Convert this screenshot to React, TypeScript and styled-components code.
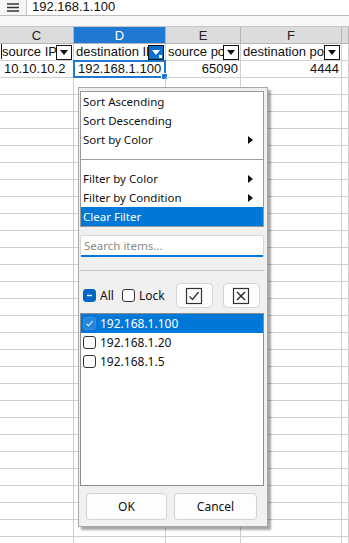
import styled, { createGlobalStyle } from "styled-components";

const GlobalStyle = createGlobalStyle`
  html, body {
    margin: 0;
    padding: 0;
    background: #ffffff;
    overflow: hidden;
  }
  * { box-sizing: border-box; }
`;

const Screen = styled.div`
  position: relative;
  width: 349px;
  height: 543px;
  overflow: hidden;
  background: #ffffff;
  font-family: "Liberation Sans", Arial, sans-serif;
`;

const FormulaBar = styled.div`
  display: flex;
  height: 16px;
  background: #f6f6f6;
  border-bottom: 1px solid #bdbdbd;
`;

const MenuGlyph = styled.div`
  width: 26px;
  display: flex;
  align-items: center;
  justify-content: center;
`;

const FormulaInput = styled.div`
  flex: 1;
  background: #ffffff;
  border-left: 1px solid #c4c4c4;
  padding-left: 5px;
  font-size: 13px;
  line-height: 14px;
  color: #111;
`;

const Spacer = styled.div`
  height: 10px;
  background: #f7f7f7;
`;

const cols = "74px 92px 75px 101px 1fr";

const HeaderRow = styled.div`
  display: grid;
  grid-template-columns: ${cols};
  height: 18px;
  background: #dcdcdc;
  border-top: 1px solid #c8c8c8;
`;

const ColHead = styled.div<{ $active?: boolean }>`
  border-right: 1px solid #b4b4b4;
  border-bottom: 1px solid #b4b4b4;
  display: flex;
  align-items: center;
  justify-content: center;
  font-size: 13px;
  color: ${(p) => (p.$active ? "#ffffff" : "#222")};
  background: ${(p) => (p.$active ? "#1f78d1" : "transparent")};
`;

const Row = styled.div`
  display: grid;
  grid-template-columns: ${cols};
  height: 17px;
`;

const Cell = styled.div<{ $right?: boolean }>`
  position: relative;
  border-right: 1px solid #cfcfcf;
  border-bottom: 1px solid #cfcfcf;
  font-size: 13px;
  line-height: 16px;
  color: #111;
  padding: 0 2px 0 4px;
  white-space: nowrap;
  overflow: hidden;
  text-align: ${(p) => (p.$right ? "right" : "left")};
`;

const FilterCell = styled(Cell)`
  padding-left: 2px;
  padding-right: 18px;
`;

const DropButton = styled.div<{ $active?: boolean }>`
  position: absolute;
  right: 1px;
  top: 1px;
  width: 16px;
  height: 15px;
  border: 1px solid #111;
  background: ${(p) => (p.$active ? "#0b6fd1" : "#ffffff")};
  display: flex;
  align-items: center;
  justify-content: center;
  &::after {
    content: "";
    width: 0;
    height: 0;
    border-left: 4px solid transparent;
    border-right: 4px solid transparent;
    border-top: 5px solid ${(p) => (p.$active ? "#ffffff" : "#111")};
  }
`;

const ActiveMark = styled.div`
  position: absolute;
  right: 1px;
  bottom: 1px;
  width: 3px;
  height: 3px;
  background: #ffffff;
`;

const SelectedCell = styled(Cell)`
  overflow: visible;
  &::before {
    content: "";
    position: absolute;
    left: -1px;
    top: -1px;
    right: -1px;
    bottom: -1px;
    border: 2px solid #1f78d1;
    pointer-events: none;
  }
  &::after {
    content: "";
    position: absolute;
    right: -3px;
    bottom: -3px;
    width: 5px;
    height: 5px;
    background: #1f78d1;
    border: 1px solid #ffffff;
  }
`;

const LeftEdge = styled.div`
  position: absolute;
  left: 0;
  top: 44px;
  width: 2px;
  height: 15px;
  border-right: 1px solid #111;
`;

/* Autofilter popup */

const Popup = styled.div`
  position: absolute;
  left: 78px;
  top: 87px;
  width: 190px;
  height: 440px;
  background: #f0f0f0;
  border: 1px solid #a8a8a8;
  box-shadow: 3px 3px 2px rgba(0, 0, 0, 0.35);
  padding: 3px 3px 0 1px;
  display: flex;
  flex-direction: column;
  font-family: "Noto Sans", "Open Sans", sans-serif;
  font-size: 11.5px;
  color: #111;
`;

const Menu = styled.div`
  background: #ffffff;
  border: 1px solid #9a9a9a;
  display: flex;
  flex-direction: column;
`;

const MenuItem = styled.div<{ $selected?: boolean }>`
  height: 19px;
  display: flex;
  align-items: center;
  justify-content: space-between;
  padding: 0 10px 0 2px;
  background: ${(p) => (p.$selected ? "#0078d7" : "transparent")};
  color: ${(p) => (p.$selected ? "#ffffff" : "#111")};
`;

const SubArrow = styled.span`
  width: 0;
  height: 0;
  border-top: 4.5px solid transparent;
  border-bottom: 4.5px solid transparent;
  border-left: 5px solid #111;
`;

const MenuSeparator = styled.div`
  height: 20px;
  display: flex;
  align-items: center;
  &::after {
    content: "";
    flex: 1;
    height: 1px;
    background: #a0a0a0;
  }
`;

const SearchBox = styled.div`
  margin-top: 8px;
  height: 22px;
  background: #ffffff;
  border: 1px solid #d6d6d6;
  border-bottom: 2px solid #0078d7;
  border-radius: 2px;
  display: flex;
  align-items: center;
  padding-left: 3px;
  color: #8a8a8a;
`;

const Divider = styled.div`
  margin-top: 13px;
  height: 1px;
  background: #c4c4c4;
`;

const ToggleRow = styled.div`
  margin-top: 12px;
  height: 25px;
  display: flex;
  align-items: center;
  padding-left: 3px;
`;

const Check = styled.span<{ $state: "on" | "mixed" | "off"; $onBlue?: boolean }>`
  width: 13px;
  height: 13px;
  border-radius: 3px;
  flex: none;
  display: inline-flex;
  align-items: center;
  justify-content: center;
  border: 1px solid ${(p) => (p.$state === "off" ? "#333" : p.$onBlue ? "#3a8fe0" : "#0067c0")};
  background: ${(p) => (p.$state === "off" ? "#ffffff" : p.$onBlue ? "#2484dc" : "#0067c0")};
`;

const ToggleLabel = styled.span`
  margin-left: 4px;
  margin-right: 8px;
  font-size: 12px;
`;

const IconButton = styled.div<{ $first?: boolean }>`
  width: 37px;
  height: 25px;
  margin-left: ${(p) => (p.$first ? "3px" : "10px")};
  background: #fdfdfd;
  border: 1px solid #d4d4d4;
  border-radius: 4px;
  display: flex;
  align-items: center;
  justify-content: center;
`;

const ListBox = styled.div`
  margin-top: 5px;
  height: 173px;
  background: #ffffff;
  border: 1px solid #8c8c8c;
  display: flex;
  flex-direction: column;
`;

const ListItem = styled.div<{ $selected?: boolean }>`
  height: 19px;
  display: flex;
  align-items: center;
  padding-left: 2px;
  gap: 4px;
  font-size: 12px;
  background: ${(p) => (p.$selected ? "#0078d7" : "transparent")};
  color: ${(p) => (p.$selected ? "#ffffff" : "#111")};
`;

const ButtonRow = styled.div`
  margin-top: 7px;
  display: flex;
  gap: 7px;
  padding-left: 6px;
`;

const DialogButton = styled.div<{ $w: number }>`
  width: ${(p) => p.$w}px;
  height: 27px;
  background: #fdfdfd;
  border: 1px solid #d2d2d2;
  border-radius: 4px;
  display: flex;
  align-items: center;
  justify-content: center;
  font-size: 12px;
`;

const CheckMark = ({ color = "#ffffff" }: { color?: string }) => (
  <svg width="9" height="9" viewBox="0 0 9 9">
    <path d="M1.5 4.8 L3.6 6.8 L7.6 2" fill="none" stroke={color} strokeWidth="1.1" />
  </svg>
);

const Minus = () => (
  <svg width="9" height="9" viewBox="0 0 9 9">
    <path d="M2 4.5 H7" stroke="#ffffff" strokeWidth="1.4" />
  </svg>
);

const CheckSquare = () => (
  <svg width="18" height="18" viewBox="0 0 18 18">
    <rect x="1.5" y="1.5" width="15" height="15" fill="none" stroke="#333" strokeWidth="1.2" />
    <path d="M4.5 9.5 L7.5 12.5 L13.5 5" fill="none" stroke="#333" strokeWidth="1.3" />
  </svg>
);

const CrossSquare = () => (
  <svg width="18" height="18" viewBox="0 0 18 18">
    <rect x="1.5" y="1.5" width="15" height="15" fill="none" stroke="#333" strokeWidth="1.2" />
    <path d="M5 5 L13 13 M13 5 L5 13" fill="none" stroke="#333" strokeWidth="1.6" />
  </svg>
);

const Hamburger = () => (
  <svg width="12" height="9" viewBox="0 0 12 9">
    <path d="M0 1 H12 M0 4.5 H12 M0 8 H12" stroke="#333" strokeWidth="1.3" />
  </svg>
);

const emptyRows = Array.from({ length: 28 });

export default function App() {
  return (
    <>
      <GlobalStyle />
      <Screen>
        <FormulaBar>
          <MenuGlyph>
            <Hamburger />
          </MenuGlyph>
          <FormulaInput>192.168.1.100</FormulaInput>
        </FormulaBar>
        <Spacer />
        <HeaderRow>
          <ColHead>C</ColHead>
          <ColHead $active>D</ColHead>
          <ColHead>E</ColHead>
          <ColHead>F</ColHead>
          <ColHead />
        </HeaderRow>
        <Row>
          <FilterCell>
            source IP
            <DropButton />
          </FilterCell>
          <FilterCell>
            destination IP
            <DropButton $active>
              <ActiveMark />
            </DropButton>
          </FilterCell>
          <FilterCell>
            source port
            <DropButton />
          </FilterCell>
          <FilterCell>
            destination port
            <DropButton />
          </FilterCell>
          <Cell />
        </Row>
        <Row>
          <Cell>10.10.10.2</Cell>
          <SelectedCell>192.168.1.100</SelectedCell>
          <Cell $right>65090</Cell>
          <Cell $right>4444</Cell>
          <Cell />
        </Row>
        {emptyRows.map((_, i) => (
          <Row key={i}>
            <Cell />
            <Cell />
            <Cell />
            <Cell />
            <Cell />
          </Row>
        ))}
        <LeftEdge />

        <Popup>
          <Menu>
            <MenuItem>Sort Ascending</MenuItem>
            <MenuItem>Sort Descending</MenuItem>
            <MenuItem>
              Sort by Color
              <SubArrow />
            </MenuItem>
            <MenuSeparator />
            <MenuItem>
              Filter by Color
              <SubArrow />
            </MenuItem>
            <MenuItem>
              Filter by Condition
              <SubArrow />
            </MenuItem>
            <MenuItem $selected>Clear Filter</MenuItem>
          </Menu>
          <SearchBox>Search items...</SearchBox>
          <Divider />
          <ToggleRow>
            <Check $state="mixed">
              <Minus />
            </Check>
            <ToggleLabel>All</ToggleLabel>
            <Check $state="off" />
            <ToggleLabel>Lock</ToggleLabel>
            <IconButton $first>
              <CheckSquare />
            </IconButton>
            <IconButton>
              <CrossSquare />
            </IconButton>
          </ToggleRow>
          <ListBox>
            <ListItem $selected>
              <Check $state="on" $onBlue>
                <CheckMark />
              </Check>
              192.168.1.100
            </ListItem>
            <ListItem>
              <Check $state="off" />
              192.168.1.20
            </ListItem>
            <ListItem>
              <Check $state="off" />
              192.168.1.5
            </ListItem>
          </ListBox>
          <ButtonRow>
            <DialogButton $w={81}>OK</DialogButton>
            <DialogButton $w={83}>Cancel</DialogButton>
          </ButtonRow>
        </Popup>
      </Screen>
    </>
  );
}
